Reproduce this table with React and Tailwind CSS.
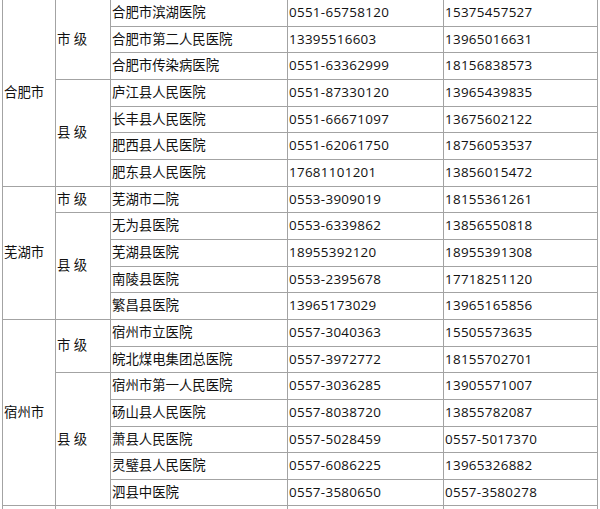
import React from "react";

const cell = "bg-white flex items-center pl-px whitespace-nowrap";
const num = "tracking-[0.3px]";

const cities = [
  { name: "合肥市", cls: "col-start-1 row-start-1 row-span-7" },
  { name: "芜湖市", cls: "col-start-1 row-start-8 row-span-5" },
  { name: "宿州市", cls: "col-start-1 row-start-13 row-span-7" },
  { name: "\u00a0", cls: "col-start-1 row-start-20 row-span-1" },
];

const levels = [
  { name: "市 级", cls: "col-start-2 row-start-1 row-span-3" },
  { name: "县 级", cls: "col-start-2 row-start-4 row-span-4" },
  { name: "市 级", cls: "col-start-2 row-start-8 row-span-1" },
  { name: "县 级", cls: "col-start-2 row-start-9 row-span-4" },
  { name: "市 级", cls: "col-start-2 row-start-13 row-span-2" },
  { name: "县 级", cls: "col-start-2 row-start-15 row-span-5" },
  { name: "\u00a0", cls: "col-start-2 row-start-20 row-span-1" },
];

const rows = [
  ["合肥市滨湖医院", "0551-65758120", "15375457527", ""],
  ["合肥市第二人民医院", "13395516603", "13965016631", ""],
  ["合肥市传染病医院", "0551-63362999", "18156838573", ""],
  ["庐江县人民医院", "0551-87330120", "13965439835", ""],
  ["长丰县人民医院", "0551-66671097", "13675602122", ""],
  ["肥西县人民医院", "0551-62061750", "18756053537", ""],
  ["肥东县人民医院", "17681101201", "13856015472", ""],
  ["芜湖市二院", "0553-3909019", "18155361261", ""],
  ["无为县医院", "0553-6339862", "13856550818", ""],
  ["芜湖县医院", "18955392120", "18955391308", ""],
  ["南陵县医院", "0553-2395678", "17718251120", ""],
  ["繁昌县医院", "13965173029", "13965165856", ""],
  ["宿州市立医院", "0557-3040363", "15505573635", ""],
  ["皖北煤电集团总医院", "0557-3972772", "18155702701", ""],
  ["宿州市第一人民医院", "0557-3036285", "13905571007", ""],
  ["砀山县人民医院", "0557-8038720", "13855782087", "pl-[4px]"],
  ["萧县人民医院", "0557-5028459", "0557-5017370", "pl-[12px]"],
  ["灵璧县人民医院", "0557-6086225", "13965326882", "pl-[8px]"],
  ["泗县中医院", "0557-3580650", "0557-3580278", ""],
  ["\u00a0", "\u00a0", "\u00a0", ""],
];

export default function App() {
  return (
    <div className="w-[600px] h-[509px] overflow-hidden bg-white">
      <div className="ml-[2px] w-[596px] grid grid-cols-[52px_54px_176px_155px_153px] grid-rows-[repeat(20,25.67px)] gap-px px-px bg-[#a3a3a3] text-[13.4px] leading-none text-[#111111] font-['Open_Sans','Noto_Sans_CJK_SC',sans-serif]">
        {cities.map((c, i) => (
          <div key={"c" + i} className={`${cell} ${c.cls}`}>
            {c.name}
          </div>
        ))}
        {levels.map((l, i) => (
          <div key={"l" + i} className={`${cell} ${l.cls}`}>
            {l.name}
          </div>
        ))}
        {rows.map((r, i) => (
          <React.Fragment key={i}>
            <div className={`${cell} col-start-3 ${r[3]}`}>{r[0]}</div>
            <div className={`${cell} ${num} col-start-4`}>{r[1]}</div>
            <div className={`${cell} ${num} col-start-5`}>{r[2]}</div>
          </React.Fragment>
        ))}
      </div>
    </div>
  );
}
